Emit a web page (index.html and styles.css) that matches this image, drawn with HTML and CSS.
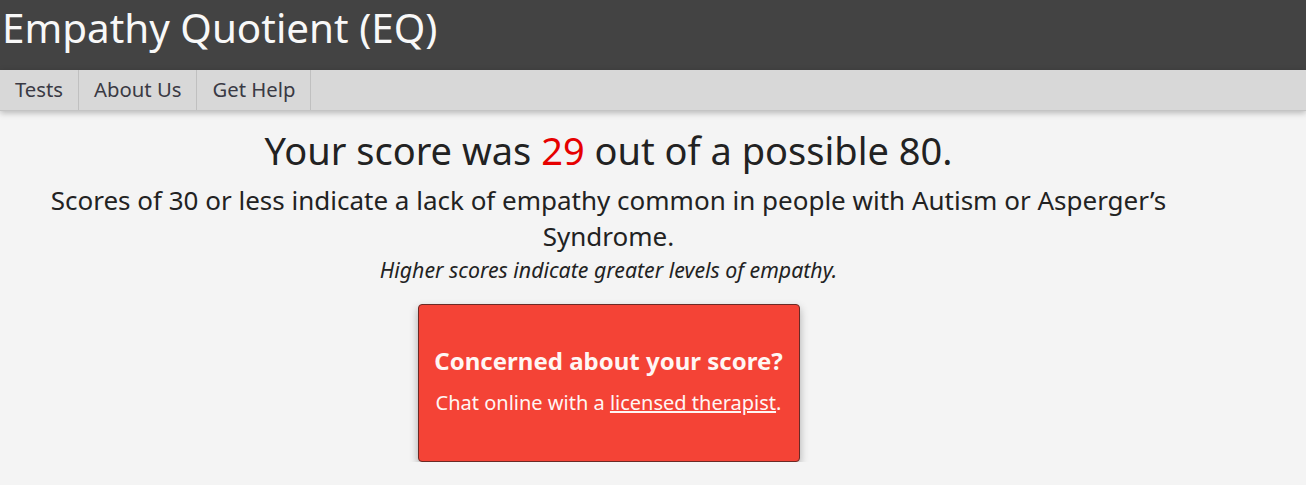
FILE: index.html
```html
<!DOCTYPE html>
<html>
<head>
<meta charset="utf-8">
<link rel="stylesheet" href="styles.css">
</head>
<body>
<header class="top">
  <h1 class="title">Empathy Quotient (EQ)</h1>
</header>
<nav class="nav">
  <a class="nav-item" href="#">Tests</a>
  <a class="nav-item" href="#">About Us</a>
  <a class="nav-item" href="#">Get Help</a>
</nav>
<main class="main">
  <section class="content">
    <h2 class="score">Your score was <span class="num">29</span> out of a possible 80.</h2>
    <p class="desc">Scores of 30 or less indicate a lack of empathy common in people with Autism or Asperger’s Syndrome.</p>
    <p class="note">Higher scores indicate greater levels of empathy.</p>
    <div class="cta">
      <div class="cta-title">Concerned about your score?</div>
      <div class="cta-text">Chat online with a <a href="#" class="cta-link">licensed therapist</a>.</div>
    </div>
  </section>
</main>
</body>
</html>
```
FILE: styles.css
```css
* { box-sizing: border-box; }
html, body { margin: 0; padding: 0; }
body {
  font-family: "Noto Sans", "Open Sans", sans-serif;
  background: #f4f4f4;
  color: #222;
}
.top {
  background: #434343;
  height: 70px;
  display: flex;
  align-items: center;
}
.title {
  margin: 0;
  padding-left: 2px;
  font-weight: 400;
  font-size: 40.4px;
  color: #f8f8f8;
  line-height: 1;
  transform: translateY(-7px);
}
.nav {
  background: #d8d8d8;
  height: 41px;
  display: flex;
  box-shadow: 0 2px 6px rgba(0,0,0,0.25);
  border-bottom: 1px solid #c4c4c4;
  position: relative;
}
.nav-item {
  display: flex;
  align-items: center;
  padding: 0 15px 2px;
  font-size: 20.3px;
  color: #3a3a44;
  text-decoration: none;
  border-right: 1px solid #c0c0c0;
}
.main {
  display: flex;
}
.content {
  width: 1217px;
  text-align: center;
  padding: 14px 30px 0;
}
.score {
  margin: 0;
  font-weight: 400;
  font-size: 38px;
  line-height: 50px;
  color: #222;
}
.num { color: #e60000; }
.desc {
  margin: 7px 0 0;
  font-size: 26px;
  line-height: 36px;
}
.note {
  margin: 0;
  font-style: italic;
  font-size: 21.3px;
  line-height: 32px;
}
.cta {
  margin: 18px auto 0;
  width: 382px;
  height: 158px;
  background: #f44336;
  border: 1px solid #6b2a25;
  border-radius: 4px;
  box-shadow: 0 4px 8px rgba(0,0,0,0.3);
  color: #fff6f4;
  display: flex;
  flex-direction: column;
  justify-content: center;
  gap: 12px;
  padding-bottom: 7px;
}
.cta-title {
  font-weight: 700;
  font-size: 24px;
}
.cta-text {
  font-size: 20px;
}
.cta-link { color: #fff6f4; }
```
